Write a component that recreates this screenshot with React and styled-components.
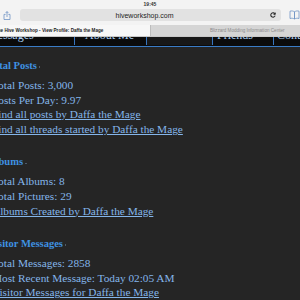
import React from "react";
import styled, { createGlobalStyle } from "styled-components";

const Global = createGlobalStyle`
  html, body { margin: 0; padding: 0; background: #252525; }
  body { width: 300px; height: 300px; overflow: hidden; }
  #root { width: 300px; height: 300px; overflow: hidden; }
`;

const Screen = styled.div`
  width: 300px;
  height: 300px;
  display: flex;
  flex-direction: column;
  overflow: hidden;
  background: #252525;
`;

const StatusBar = styled.div`
  height: 8px;
  background: #f3f3f3;
  display: flex;
  justify-content: center;
  align-items: center;
`;

const Time = styled.span`
  font-family: "Liberation Sans", Arial, sans-serif;
  font-weight: 700;
  font-size: 5px;
  line-height: 5px;
  color: #333;
`;

const Toolbar = styled.div`
  height: 17px;
  background: #f3f3f3;
  display: flex;
  align-items: flex-start;
  padding-top: 1px;
  box-sizing: border-box;
`;

const IconSlot = styled.div`
  width: ${(p) => p.$w}px;
  height: 12px;
  display: flex;
  align-items: center;
  justify-content: ${(p) => p.$justify || "center"};
  padding-left: ${(p) => p.$pad || 0}px;
  box-sizing: border-box;
  flex-shrink: 0;
`;

const UrlField = styled.div`
  flex: 1;
  height: 12px;
  background: #e2e2e2;
  border-radius: 3px;
  display: flex;
  align-items: center;
`;

const UrlText = styled.span`
  flex: 1;
  text-align: center;
  font-family: "Liberation Sans", Arial, sans-serif;
  font-size: 7px;
  color: #222;
  padding-left: 2px;
`;

const Reload = styled.div`
  width: 12px;
  display: flex;
  justify-content: center;
  margin-right: 2px;
`;

const TabStrip = styled.div`
  height: 12px;
  display: flex;
  border-bottom: 1px solid #c8c8c8;
  box-sizing: border-box;
`;

const BrowserTab = styled.div`
  width: 150px;
  display: flex;
  align-items: center;
  overflow: hidden;
  white-space: nowrap;
  background: ${(p) => (p.$active ? "#f7f7f7" : "#d5d5d5")};
  border-left: ${(p) => (p.$active ? "none" : "1px solid #bdbdbd")};
  box-sizing: border-box;
  padding-left: ${(p) => p.$pad}px;
  font-family: "Liberation Sans", Arial, sans-serif;
  font-size: 4.6px;
  font-weight: ${(p) => (p.$active ? 700 : 400)};
  color: ${(p) => (p.$active ? "#1c1c1c" : "#8c8c8c")};
`;

const TabLabel = styled.span`
  margin-left: ${(p) => p.$shift || 0}px;
`;

const Viewport = styled.div`
  flex: 1;
  display: flex;
  flex-direction: column;
  overflow: hidden;
`;

const SiteNav = styled.div`
  height: 12px;
  background: #0b0b0b;
  display: flex;
  align-items: flex-start;
  overflow: hidden;
`;

const NavTab = styled.div`
  width: ${(p) => p.$w}px;
  height: 8px;
  flex-shrink: 0;
  overflow: hidden;
  box-sizing: border-box;
  border-right: 1px solid #3775be;
  background: ${(p) => (p.$dim ? "#181818" : "#0b0b0b")};
  padding-left: ${(p) => p.$pad}px;
  white-space: nowrap;
`;

const NavLabel = styled.div`
  margin-top: -8px;
  font-family: "Liberation Serif", "Times New Roman", serif;
  font-size: 12px;
  line-height: 12px;
  color: #a9cdf2;
  margin-left: ${(p) => p.$shift || 0}px;
`;

const NavRule = styled.div`
  height: 2px;
  background: #3a7cc6;
`;

const Content = styled.div`
  margin-left: -8px;
  padding-top: 11px;
  display: flex;
  flex-direction: column;
  gap: 17.5px;
  font-family: "Liberation Serif", "Times New Roman", serif;
  white-space: nowrap;
`;

const Section = styled.section`
  display: flex;
  flex-direction: column;
`;

const Heading = styled.div`
  margin-left: -4px;
  margin-bottom: 5px;
  font-size: 10.5px;
  line-height: 15px;
  font-weight: 700;
  color: #3f92e2;
  &::after {
    content: "";
    display: inline-block;
    width: 1.5px;
    height: 1.5px;
    margin-left: 2px;
    vertical-align: 1px;
    background: #4d5b6a;
  }
`;

const Item = styled.div`
  font-size: 11.3px;
  line-height: 14.7px;
  color: #84b5ea;
`;

const ItemLink = styled.a`
  color: #84b5ea;
  text-decoration: underline;
  text-underline-offset: 1px;
  text-decoration-thickness: 1px;
`;

const ShareIcon = () => (
  <svg width="8" height="9" viewBox="0 0 8 9" fill="none" stroke="#6f93c4" strokeWidth="0.8">
    <path d="M2.6 3.4H1v5.1h6V3.4H5.4" />
    <path d="M4 6V0.6M2.6 2L4 0.6 5.4 2" />
  </svg>
);

const ReloadIcon = () => (
  <svg width="6" height="6" viewBox="0 0 6 6" fill="none" stroke="#2d2d2d" strokeWidth="1.1">
    <path d="M5 2.1A2.2 2.2 0 1 0 5.1 3.6" />
    <path d="M5.3 0.6V2.4H3.5" strokeWidth="0.9" />
  </svg>
);

const BookIcon = () => (
  <svg width="11" height="10" viewBox="0 0 11 10" fill="none" stroke="#6f93c4" strokeWidth="0.8">
    <path d="M1 1.2C2.6 0.7 4 0.9 5.5 1.8V9C4 8.2 2.6 8 1 8.5Z" />
    <path d="M10 1.2C8.4 0.7 7 0.9 5.5 1.8V9C7 8.2 8.4 8 10 8.5Z" />
  </svg>
);

const sections = [
  {
    title: "Total Posts",
    items: [
      { text: "Total Posts: 3,000" },
      { text: "Posts Per Day: 9.97" },
      { text: "Find all posts by Daffa the Mage", link: true },
      { text: "Find all threads started by Daffa the Mage", link: true },
    ],
  },
  {
    title: "Albums",
    items: [
      { text: "Total Albums: 8" },
      { text: "Total Pictures: 29" },
      { text: "Albums Created by Daffa the Mage", link: true },
    ],
  },
  {
    title: "Visitor Messages",
    items: [
      { text: "Total Messages: 2858" },
      { text: "Most Recent Message: Today 02:05 AM" },
      { text: "Visitor Messages for Daffa the Mage", link: true },
    ],
  },
];

const navTabs = [
  { label: "Messages", w: 75, pad: 0, shift: -13 },
  { label: "About Me", w: 72, pad: 10 },
  { label: "", w: 66, pad: 0, dim: true },
  { label: "Friends", w: 61, pad: 4 },
  { label: "Contact Info", w: 60, pad: 3 },
];

export default function App() {
  return (
    <>
      <Global />
      <Screen>
        <StatusBar>
          <Time>19:45</Time>
        </StatusBar>
        <Toolbar>
          <IconSlot $w={20} $justify="flex-start" $pad={3}>
            <ShareIcon />
          </IconSlot>
          <UrlField>
            <UrlText>hiveworkshop.com</UrlText>
            <Reload>
              <ReloadIcon />
            </Reload>
          </UrlField>
          <IconSlot $w={19} $justify="flex-end">
            <BookIcon />
          </IconSlot>
        </Toolbar>
        <TabStrip>
          <BrowserTab $active $pad={0}>
            <TabLabel $shift={-5}>The Hive Workshop - View Profile: Daffa the Mage</TabLabel>
          </BrowserTab>
          <BrowserTab $pad={59}>
            <TabLabel>Blizzard Modding Information Center</TabLabel>
          </BrowserTab>
        </TabStrip>
        <Viewport>
          <SiteNav>
            {navTabs.map((t, i) => (
              <NavTab key={i} $w={t.w} $pad={t.pad} $dim={t.dim}>
                <NavLabel $shift={t.shift}>{t.label}</NavLabel>
              </NavTab>
            ))}
          </SiteNav>
          <NavRule />
          <Content>
            {sections.map((s) => (
              <Section key={s.title}>
                <Heading>{s.title}</Heading>
                {s.items.map((it) => (
                  <Item key={it.text}>
                    {it.link ? <ItemLink href="#">{it.text}</ItemLink> : it.text}
                  </Item>
                ))}
              </Section>
            ))}
          </Content>
        </Viewport>
      </Screen>
    </>
  );
}
